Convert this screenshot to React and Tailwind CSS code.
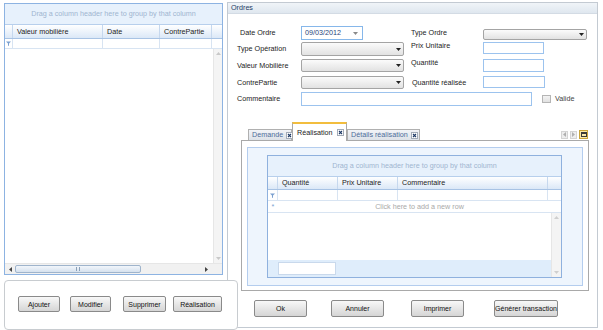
import React from "react";

function Arrow({ dir = "down", color = "#333", className = "" }) {
    const paths = {
        down: "M0 1h5L2.5 4z",
        up: "M0 4h5L2.5 1z",
        left: "M4 0v5L1 2.5z",
        right: "M1 0v5L4 2.5z",
    };
    return (
        <svg width="5" height="5" viewBox="0 0 5 5" className={className}>
            <path d={paths[dir]} fill={color} />
        </svg>
    );
}

function Funnel() {
    return (
        <svg width="5" height="5" viewBox="0 0 5 5">
            <path d="M0 0.5h5L3 2.6V5L2 4.4V2.6z" fill="#7a9fcf" />
        </svg>
    );
}

function CloseBox() {
    return (
        <svg width="7" height="7" viewBox="0 0 7 7" className="shrink-0">
            <rect x="0.5" y="0.5" width="6" height="6" fill="#fff" stroke="#a3acb8" />
            <path d="M2 2l3 3M5 2l-3 3" stroke="#1e3a66" strokeWidth="1.1" />
        </svg>
    );
}

function Btn({ children, className = "" }) {
    return (
        <div
            className={`flex items-center justify-center whitespace-nowrap rounded-[2px] border border-[#8a8a8a] bg-linear-to-b from-[#f8f8f8] to-[#d5d5d5] text-[7px] text-[#111] ${className}`}
        >
            {children}
        </div>
    );
}

function Combo({ className = "" }) {
    return (
        <div
            className={`flex items-center justify-end rounded-[2px] border border-[#a4a4a4] bg-linear-to-b from-[#fbfbfb] to-[#e2e2e2] pr-[2px] ${className}`}
        >
            <Arrow dir="down" color="#222" />
        </div>
    );
}

function TextBox({ className = "" }) {
    return <div className={`border border-[#9cc3ee] bg-white ${className}`} />;
}

function GroupPanel({ className = "" }) {
    return (
        <div
            className={`flex items-center justify-center border-b border-[#b7cfec] bg-[#e7f1fc] text-[#9fb5d0] ${className}`}
        >
            Drag a column header here to group by that column
        </div>
    );
}

function HeaderCell({ children, className = "" }) {
    return (
        <div className={`flex items-center border-r border-[#c6d8ee] pl-[4px] text-[#222] ${className}`}>
            {children}
        </div>
    );
}

function ClosableTab({ label, selected, className = "" }) {
    return (
        <div
            className={
                selected
                    ? `relative z-10 -mb-px flex h-[19px] items-center gap-[4px] whitespace-nowrap border-x border-t-2 border-[#a9a9a9] border-t-[#f2bd3d] bg-white pl-[4px] text-[#222] ${className}`
                    : `flex h-[11px] items-center gap-[3px] whitespace-nowrap border-x border-t border-[#b0b0b0] bg-linear-to-b from-[#f2f4f7] to-[#dde2e8] pl-[3px] text-[#4d6d9a] ${className}`
            }
        >
            <span>{label}</span>
            <CloseBox />
        </div>
    );
}

function LeftGrid() {
    return (
        <div className="mt-[1px] flex h-[272px] w-[219px] flex-col border border-[#8db3e2] bg-white">
            <GroupPanel className="h-[21px]" />
            <div className="flex h-[14px] border-b border-[#a8c3e4] bg-linear-to-b from-[#ffffff] to-[#dbe8f7]">
                <div className="w-[8px] border-r border-[#c6d8ee]" />
                <HeaderCell className="w-[90px]">Valeur mobilière</HeaderCell>
                <HeaderCell className="w-[57px]">Date</HeaderCell>
                <HeaderCell className="w-[52px]">ContrePartie</HeaderCell>
                <div className="flex-1" />
            </div>
            <div className="flex h-[10px] border-b border-[#d8e4f2]">
                <div className="flex w-[8px] items-center justify-center border-r border-[#d8e4f2]">
                    <Funnel />
                </div>
                <div className="w-[90px] border-r border-[#d8e4f2]" />
                <div className="w-[57px] border-r border-[#d8e4f2]" />
                <div className="w-[52px] border-r border-[#d8e4f2]" />
                <div className="flex-1" />
            </div>
            <div className="flex flex-1">
                <div className="flex-1" />
                <div className="flex w-[9px] flex-col items-center justify-between border-l border-[#e6e6e6] bg-[#f4f4f4] py-[2px]">
                    <Arrow dir="up" color="#c8c8c8" />
                    <Arrow dir="down" color="#c8c8c8" />
                </div>
            </div>
            <div className="flex h-[11px] items-center border-t border-[#e6e6e6] bg-[#f1f1f1]">
                <div className="flex w-[10px] justify-center">
                    <Arrow dir="left" color="#444" />
                </div>
                <div className="flex h-[8px] w-[126px] items-center justify-center rounded-[2px] border border-[#9fb4cc] bg-linear-to-b from-[#f2f6fb] to-[#d6e1ee]">
                    <div className="h-[4px] w-[4px] border-x border-[#8aa0b8]" />
                </div>
                <div className="flex flex-1 justify-end pr-[13px]">
                    <Arrow dir="right" color="#444" />
                </div>
            </div>
        </div>
    );
}

function LeftButtons() {
    return (
        <div className="relative z-10 mt-[5px] flex h-[50px] w-[234px] items-center rounded-[4px] border border-[#c8ccd0] bg-white pb-[2px] pl-[13px]">
            <Btn className="h-[16px] w-[42px]">Ajouter</Btn>
            <Btn className="ml-[10px] h-[16px] w-[41px]">Modifier</Btn>
            <Btn className="ml-[12px] h-[16px] w-[43px]">Supprimer</Btn>
            <Btn className="ml-[7px] h-[16px] w-[49px]">Réalisation</Btn>
        </div>
    );
}

function InnerGrid() {
    return (
        <div className="ml-[19px] mt-[7px] flex h-[123px] w-[295px] flex-col border border-[#8fb1de] bg-white">
            <GroupPanel className="h-[21px]" />
            <div className="flex h-[13px] border-b border-[#a8c3e4] bg-linear-to-b from-[#ffffff] to-[#dbe8f7]">
                <div className="w-[10px] border-r border-[#c6d8ee]" />
                <HeaderCell className="w-[60px]">Quantité</HeaderCell>
                <HeaderCell className="w-[60px]">Prix Unitaire</HeaderCell>
                <HeaderCell className="w-[150px]">Commentaire</HeaderCell>
                <div className="flex-1" />
            </div>
            <div className="flex h-[11px] border-b border-[#d8e4f2]">
                <div className="flex w-[10px] items-center justify-center border-r border-[#d8e4f2]">
                    <Funnel />
                </div>
                <div className="w-[60px] border-r border-[#d8e4f2]" />
                <div className="w-[60px] border-r border-[#d8e4f2]" />
                <div className="w-[150px] border-r border-[#d8e4f2]" />
                <div className="flex-1" />
            </div>
            <div className="flex h-[12px] border-b border-[#d8e4f2]">
                <div className="flex w-[10px] items-center justify-center text-[#7a9fcf]">*</div>
                <div className="flex flex-1 items-center justify-center text-[#a9a9a9]">
                    Click here to add a new row
                </div>
            </div>
            <div className="flex flex-1">
                <div className="flex flex-1 flex-col">
                    <div className="flex-1" />
                    <div className="flex h-[17px] items-center bg-[#dfedfb] pl-[10px]">
                        <div className="h-[13px] w-[58px] border border-[#c9d9ec] bg-white" />
                    </div>
                </div>
                <div className="flex w-[10px] flex-col items-center justify-between border-l border-[#e6e6e6] bg-[#f4f4f4] py-[2px]">
                    <Arrow dir="up" color="#cfcfcf" />
                    <Arrow dir="down" color="#cfcfcf" />
                </div>
            </div>
        </div>
    );
}

function Ordres() {
    return (
        <div className="ml-[-11px] flex h-[326px] w-[371px] flex-col border border-[#c3cad2] bg-white text-[#222]">
            <div className="flex h-[11px] items-center border-b border-[#d3dbe4] bg-linear-to-b from-[#f0f4f8] to-[#dfe7ef] pl-[3px] text-[#1f3d66]">
                Ordres
            </div>

            <div className="ml-[9px] mt-[12px] flex h-[14px] items-center">
                <div className="w-[64px] pl-[3px]">Date Ordre</div>
                <div className="flex h-[14px] w-[62px] items-center justify-between border border-[#86b7ea] bg-white pl-[3px] pr-[4px] text-[#27457a]">
                    <span>09/03/2012</span>
                    <Arrow dir="down" color="#8a8a8a" />
                </div>
                <div className="ml-[48px] w-[72px]">Type Ordre</div>
                <Combo className="mt-[2px] h-[11px] w-[104px]" />
            </div>

            <div className="ml-[9px] mt-[2px] flex h-[14px] items-center">
                <div className="w-[64px]">Type Opération</div>
                <Combo className="h-[14px] w-[103px]" />
                <div className="ml-[7px] w-[72px] self-start">Prix Unitaire</div>
                <TextBox className="h-[12px] w-[61px] self-start" />
            </div>

            <div className="ml-[9px] mt-[3px] flex h-[13px] items-center">
                <div className="w-[64px]">Valeur Mobilière</div>
                <Combo className="h-[13px] w-[103px]" />
                <div className="ml-[7px] w-[72px] self-start">Quantité</div>
                <TextBox className="h-[13px] w-[61px]" />
            </div>

            <div className="ml-[9px] mt-[4px] flex h-[13px] items-center">
                <div className="w-[64px]">ContrePartie</div>
                <Combo className="h-[13px] w-[103px]" />
                <div className="ml-[8px] w-[71px]">Quantité réalisée</div>
                <TextBox className="h-[12px] w-[62px] self-start" />
            </div>

            <div className="ml-[9px] mt-[3px] flex h-[14px] items-center">
                <div className="w-[64px]">Commentaire</div>
                <TextBox className="h-[14px] w-[231px]" />
                <div className="ml-[10px] h-[8px] w-[9px] border border-[#b5b5b5] bg-linear-to-b from-[#f3f3f3] to-[#e1e1e1]" />
                <div className="ml-[4px] text-[#444]">Valide</div>
            </div>

            <div className="ml-[13px] mt-[16px] flex h-[18px] w-[348px] items-end pl-[7px]">
                <ClosableTab label="Demande" className="w-[44px]" />
                <ClosableTab label="Réalisation" selected className="w-[55px]" />
                <ClosableTab label="Détails réalisation" className="w-[73px]" />
                <div className="mb-[1px] ml-auto mr-[1px] flex items-center gap-[2px]">
                    <div className="flex h-[8px] w-[7px] items-center justify-center border border-[#d4d4d4] bg-[#eeeeee]">
                        <Arrow dir="left" color="#b0b0b0" />
                    </div>
                    <div className="flex h-[8px] w-[7px] items-center justify-center border border-[#d4d4d4] bg-[#eeeeee]">
                        <Arrow dir="right" color="#b0b0b0" />
                    </div>
                    <div className="flex h-[9px] w-[9px] items-center justify-center border border-[#c9a43a] bg-[#fbe9a8]">
                        <div className="h-[5px] w-[6px] border border-t-2 border-[#3b3b3b]" />
                    </div>
                </div>
            </div>

            <div className="ml-[13px] flex h-[151px] w-[348px] flex-col border border-[#a9a9a9] bg-white px-[5px] pb-[4px] pt-[6px]">
                <div className="flex-1 border border-[#b4cdee] bg-[#eef5fd]">
                    <InnerGrid />
                </div>
            </div>

            <div className="ml-[26px] mt-[9px] flex">
                <Btn className="h-[17px] w-[53px]">Ok</Btn>
                <Btn className="ml-[24px] h-[17px] w-[53px]">Annuler</Btn>
                <Btn className="ml-[27px] h-[17px] w-[53px]">Imprimer</Btn>
                <Btn className="ml-[30px] h-[17px] w-[64px]">Générer transaction</Btn>
            </div>
        </div>
    );
}

export default function App() {
    return (
        <div className="flex h-[330px] w-[603px] bg-white pl-[4px] pt-[2px] font-['Liberation_Sans',Arial,sans-serif] text-[7.2px] leading-none">
            <div className="flex w-[234px] flex-col">
                <LeftGrid />
                <LeftButtons />
            </div>
            <Ordres />
        </div>
    );
}
